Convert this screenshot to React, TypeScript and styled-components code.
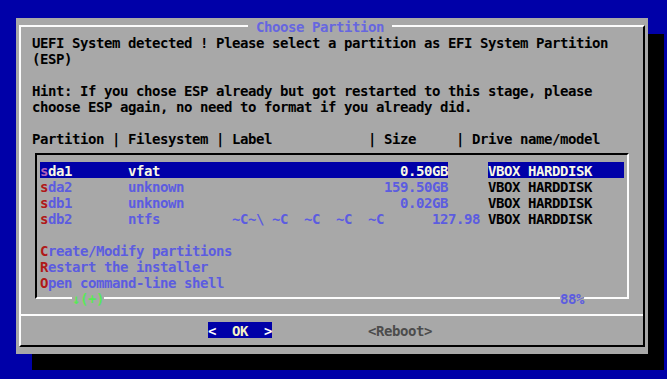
import React from "react"
import styled, { createGlobalStyle } from "styled-components"

const GlobalStyle = createGlobalStyle`
  html, body {
    margin: 0;
    padding: 0;
    background: #0000a8;
  }
  body {
    width: 667px;
    height: 379px;
    overflow: hidden;
  }
`

// 8x16 text cells, like the VGA console
const Screen = styled.div`
  width: 667px;
  height: 379px;
  box-sizing: border-box;
  padding: 18px 0 0 16px;
  background: #0000a8;
  font-family: "DejaVu Sans Mono", "Liberation Mono", monospace;
  font-weight: bold;
  font-size: 14px;
  letter-spacing: -0.43px;
  color: #000;
`

const Dialog = styled.div`
  width: 632px;
  height: 336px;
  box-sizing: border-box;
  padding: 7px 3px;
  display: flex;
  background: #a8a8a8;
  box-shadow: 16px 16px 0 #000;
`

const Frame = styled.div`
  position: relative;
  flex: 1;
  display: flex;
  flex-direction: column;
  padding-top: 7px;
  border: 2px solid;
  border-color: #fcfcfc #000 #000 #fcfcfc;
`

const Title = styled.div`
  position: absolute;
  top: -9px;
  left: 227px;
  height: 16px;
  line-height: 18px;
  white-space: pre;
  background: #a8a8a8;
  color: #6666e0;
`

const Line = styled.div`
  height: 16px;
  line-height: 18px;
  white-space: pre;
  padding-left: 11px;
`

const ListBox = styled.div`
  position: relative;
  width: 594px;
  box-sizing: border-box;
  margin: 7px 0 0 14px;
  padding: 7px 3px;
  border: 2px solid;
  border-color: #000 #fcfcfc #fcfcfc #000;
`

const Row = styled.div`
  display: flex;
  gap: 40px;
  height: 16px;
  line-height: 18px;
  white-space: pre;
`

const Cell = styled.div<{ $width: number; $selected?: boolean; $tone: "blue" | "black" }>`
  width: ${(p) => p.$width}px;
  height: 16px;
  overflow: visible;
  background: ${(p) => (p.$selected ? "#0000a8" : "transparent")};
  color: ${(p) => (p.$selected ? "#f8f8e4" : p.$tone === "blue" ? "#5c5ce0" : "#000")};
`

const Hot = styled.span<{ $selected?: boolean }>`
  color: ${(p) => (p.$selected ? "#b060b8" : "#b01818")};
`

const MenuLine = styled.div`
  height: 16px;
  line-height: 18px;
  white-space: pre;
  color: #5c5ce0;
`

const BorderMark = styled.div<{ $left: number; $color: string }>`
  position: absolute;
  top: 135px;
  left: ${(p) => p.$left}px;
  height: 16px;
  line-height: 18px;
  white-space: pre;
  background: #a8a8a8;
  color: ${(p) => p.$color};
`

const Separator = styled.div`
  margin-top: 15px;
  border-top: 2px solid #fcfcfc;
`

const ButtonRow = styled.div`
  display: flex;
  gap: 96px;
  margin-top: 6px;
  padding-left: 187px;
`

const Button = styled.div<{ $active?: boolean }>`
  width: 64px;
  height: 16px;
  line-height: 18px;
  white-space: pre;
  background: ${(p) => (p.$active ? "#0000a8" : "transparent")};
  color: ${(p) => (p.$active ? "#fcfcfc" : "#4c4c4c")};
`

const OkLabel = styled.span`
  color: #f4f4c4;
`

interface Partition {
  name: string
  fs: string
  label: string
  size: string
  drive: string
}

const partitions: Partition[] = [
  { name: "sda1", fs: "vfat", label: "", size: "0.50GB", drive: "VBOX HARDDISK" },
  { name: "sda2", fs: "unknown", label: "", size: "159.50GB", drive: "VBOX HARDDISK" },
  { name: "sdb1", fs: "unknown", label: "", size: "0.02GB", drive: "VBOX HARDDISK" },
  { name: "sdb2", fs: "ntfs", label: "~C~\\ ~C  ~C  ~C  ~C      127.98", size: "", drive: "VBOX HARDDISK" },
]

// 51 columns up to the end of the size column
const formatRow = (p: Partition) => {
  const left = p.name.padEnd(11) + p.fs.padEnd(13) + p.label
  return p.size ? left.padEnd(51 - p.size.length) + p.size : left
}

const actions = ["Create/Modify partitions", "Restart the installer", "Open command-line shell"]

export default function App() {
  const selected = 0
  return (
    <Screen>
      <GlobalStyle />
      <Dialog>
        <Frame>
          <Title> Choose Partition </Title>
          <Line>UEFI System detected ! Please select a partition as EFI System Partition</Line>
          <Line>(ESP)</Line>
          <Line />
          <Line>Hint: If you chose ESP already but got restarted to this stage, please</Line>
          <Line>choose ESP again, no need to format if you already did.</Line>
          <Line />
          <Line>Partition | Filesystem | Label            | Size     | Drive name/model</Line>
          <ListBox>
            {partitions.map((p, i) => {
              const text = formatRow(p)
              return (
                <Row key={p.name}>
                  <Cell $width={408} $selected={i === selected} $tone="blue">
                    <Hot $selected={i === selected}>{text[0]}</Hot>
                    {text.slice(1)}
                  </Cell>
                  <Cell $width={136} $selected={i === selected} $tone="black">
                    {p.drive}
                  </Cell>
                </Row>
              )
            })}
            <MenuLine />
            {actions.map((a) => (
              <MenuLine key={a}>
                <Hot>{a[0]}</Hot>
                {a.slice(1)}
              </MenuLine>
            ))}
            <BorderMark $left={35} $color="#58e858">↓(+)</BorderMark>
            <BorderMark $left={523} $color="#5c5ce0">88%</BorderMark>
          </ListBox>
          <Separator />
          <ButtonRow>
            <Button $active>
              {"<  "}
              <OkLabel>OK</OkLabel>
              {"  >"}
            </Button>
            <Button>{"<Reboot>"}</Button>
          </ButtonRow>
        </Frame>
      </Dialog>
    </Screen>
  )
}
